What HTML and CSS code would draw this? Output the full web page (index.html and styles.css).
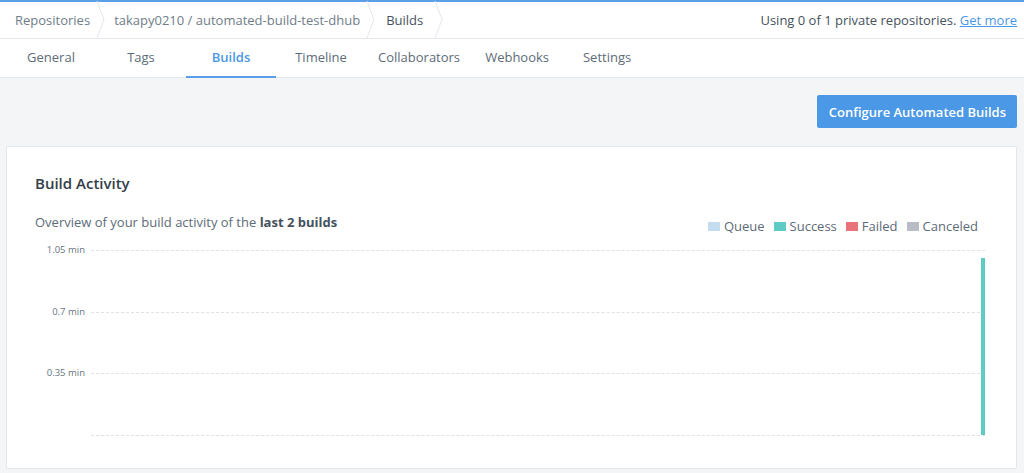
FILE: index.html
```html
<!DOCTYPE html>
<html lang="en">
<head>
    <meta charset="UTF-8">
    <meta name="viewport" content="width=device-width, initial-scale=1.0">
    <title>Builds - takapy0210/automated-build-test-dhub</title>
    <link rel="stylesheet" href="styles.css">
</head>
<body>
    <div class="header">
        <div class="crumbs">
            <div class="trail">
                <a class="crumb" href="#">Repositories</a>
                <svg class="sep" width="10" height="37" viewBox="0 0 10 37"><polyline points="1,0 8,18.5 1,37" fill="none" stroke="#e3e6ea" stroke-width="1"/></svg>
                <a class="crumb" href="#">takapy0210 / automated-build-test-dhub</a>
                <svg class="sep" width="10" height="37" viewBox="0 0 10 37"><polyline points="1,0 8,18.5 1,37" fill="none" stroke="#e3e6ea" stroke-width="1"/></svg>
                <span class="crumb current">Builds</span>
                <svg class="sep" width="10" height="37" viewBox="0 0 10 37"><polyline points="1,0 8,18.5 1,37" fill="none" stroke="#e3e6ea" stroke-width="1"/></svg>
            </div>
            <div class="usage">Using 0 of 1 private repositories. <a href="#">Get more</a></div>
        </div>
        <nav class="tabs">
            <a class="tab" href="#">General</a>
            <a class="tab" href="#">Tags</a>
            <a class="tab active" href="#">Builds</a>
            <a class="tab" href="#">Timeline</a>
            <a class="tab" href="#">Collaborators</a>
            <a class="tab" href="#">Webhooks</a>
            <a class="tab" href="#">Settings</a>
        </nav>
    </div>

    <div class="main">
        <div class="actions">
            <button class="btn">Configure Automated Builds</button>
        </div>

        <div class="card">
            <h2>Build Activity</h2>
            <div class="summary">
                <p>Overview of your build activity of the <strong>last 2 builds</strong></p>
                <ul class="legend">
                    <li><span class="swatch queue"></span>Queue</li>
                    <li><span class="swatch success"></span>Success</li>
                    <li><span class="swatch failed"></span>Failed</li>
                    <li><span class="swatch canceled"></span>Canceled</li>
                </ul>
            </div>

            <div class="chart">
                <div class="axis">
                    <div class="tick"><span>1.05 min</span></div>
                    <div class="tick"><span>0.7 min</span></div>
                    <div class="tick"><span>0.35 min</span></div>
                </div>
                <div class="plot">
                    <div class="grid"></div>
                    <div class="grid"></div>
                    <div class="grid"></div>
                    <div class="bar" style="height: 95.7%"></div>
                </div>
            </div>
        </div>
    </div>
</body>
</html>
```

FILE: styles.css
```css
body {
    margin: 0;
    background-color: #f4f5f7;
    font-family: "Open Sans", "Noto Sans", sans-serif;
    color: #5d6b78;
}
a {
    text-decoration: none;
    color: inherit;
}

.header {
    background-color: #ffffff;
    border-top: 2px solid #5a9fe8;
}
.crumbs {
    display: flex;
    justify-content: space-between;
    align-items: center;
    height: 36px;
    border-bottom: 1px solid #e5e8eb;
}
.trail {
    display: flex;
    align-items: center;
    height: 100%;
}
.crumb {
    font-size: 13px;
    color: #707d89;
    padding: 0 6px 0 8px;
}
.crumb:first-child {
    padding-left: 15px;
}
.crumb.current {
    color: #45525e;
    padding-left: 10px;
    padding-right: 11px;
}
.sep {
    display: block;
    margin-top: -1px;
}
.usage {
    font-size: 13px;
    color: #45525e;
    padding-right: 7px;
}
.usage a {
    color: #4a98e6;
    text-decoration: underline;
}

.tabs {
    display: flex;
    height: 38px;
    padding-left: 6px;
    border-bottom: 1px solid #e3e6ea;
}
.tab {
    min-width: 66px;
    padding: 0 12px;
    text-align: center;
    font-size: 13px;
    line-height: 37px;
    color: #5d6b78;
    border-bottom: 2px solid transparent;
    margin-bottom: -1px;
}
.tab.active {
    color: #4a98e6;
    font-weight: 600;
    border-bottom-color: #5a9fe8;
}

.main {
    padding: 17px 7px 0 6px;
}
.actions {
    display: flex;
    justify-content: flex-end;
}
.btn {
    background-color: #4a98e6;
    color: #ffffff;
    border: none;
    border-radius: 2px;
    height: 33px;
    padding: 0 11px 0 12px;
    font-family: inherit;
    font-size: 13px;
    font-weight: 600;
    cursor: pointer;
}

.card {
    margin-top: 18px;
    background-color: #ffffff;
    border: 1px solid #e4e7ea;
    border-radius: 2px;
    padding: 26px 31px 32px 28px;
}
.card h2 {
    margin: 0;
    font-size: 15px;
    font-weight: 600;
    color: #333e49;
    line-height: 20px;
}
.summary {
    display: flex;
    justify-content: space-between;
    align-items: flex-end;
    margin-top: 19px;
}
.summary p {
    margin: 0;
    font-size: 13px;
    line-height: 20px;
    color: #5d6b78;
}
.summary strong {
    color: #45525e;
    font-weight: 700;
}
.legend {
    display: flex;
    gap: 9px;
    list-style: none;
    margin: 0 7px -3px 0;
    padding: 0;
    font-size: 13px;
    color: #5d6b78;
}
.legend li {
    display: flex;
    align-items: center;
}
.swatch {
    width: 12px;
    height: 9px;
    margin-right: 4px;
}
.swatch.queue { background-color: #c3dcef; }
.swatch.success { background-color: #5ecbc5; }
.swatch.failed { background-color: #e8737b; }
.swatch.canceled { background-color: #b8bdc5; }

.chart {
    display: flex;
    margin-top: 18px;
}
.axis {
    width: 50px;
    margin-right: 6px;
    display: flex;
    flex-direction: column;
    height: 185px;
}
.tick {
    flex: 1;
}
.tick span {
    display: block;
    margin-top: -6px;
    font-size: 9.5px;
    line-height: 12px;
    text-align: right;
    color: #67747f;
}
.plot {
    position: relative;
    flex: 1;
    height: 185px;
    border-bottom: 1px dashed #dfe2e5;
    display: flex;
    flex-direction: column;
}
.grid {
    flex: 1;
    border-top: 1px dashed #dfe2e5;
}
.bar {
    position: absolute;
    right: 0;
    bottom: 0;
    width: 4px;
    background-color: #5ecbc5;
}
```
